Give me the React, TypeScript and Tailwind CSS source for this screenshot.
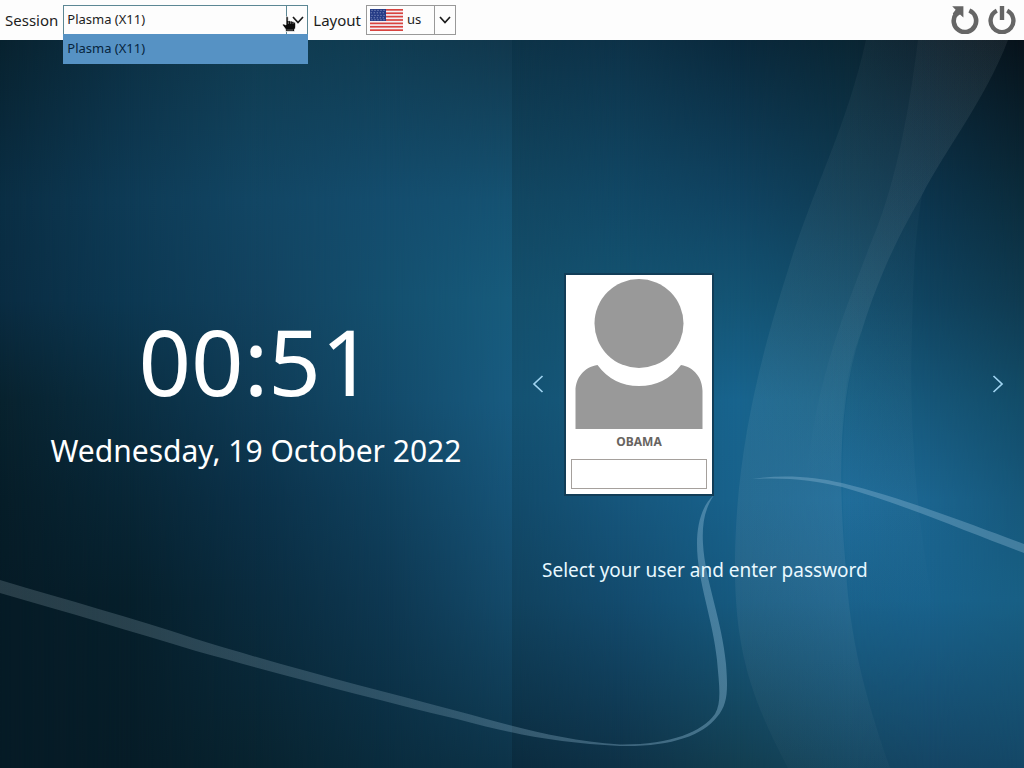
import React from "react";

type Column = { x: number; colors: string[] };

const STOPS = [0, 40, 200, 300, 400, 500, 600, 768];

const LEFT_COLUMNS: Column[] = [
  { x: 0, colors: ["#081f2c", "#08222f", "#0a2e44", "#0a2c42", "#08222e", "#061d28", "#061b26", "#061b26"] },
  { x: 130, colors: ["#0c2f42", "#0c3044", "#0e3b56", "#0c3852", "#0a2e42", "#082636", "#061f2b", "#061c27"] },
  { x: 256, colors: ["#103a4e", "#103b50", "#124664", "#12425f", "#0f3b55", "#0b3149", "#0a2b3e", "#08232f"] },
  { x: 390, colors: ["#103a50", "#103c52", "#144d6e", "#14506f", "#134b6b", "#10415e", "#0e3852", "#0a2c3e"] },
  { x: 512, colors: ["#10344a", "#11374c", "#155272", "#175b7c", "#185b80", "#165377", "#144a6a", "#0d3348"] },
];

const RIGHT_COLUMNS: Column[] = [
  { x: 512, colors: ["#0c3044", "#0d3348", "#124762", "#144f6c", "#145272", "#124a6a", "#11425e", "#0b2b3e"] },
  { x: 620, colors: ["#0c2e44", "#0d3248", "#114866", "#145472", "#165a7e", "#16567c", "#134b6e", "#0e3146"] },
  { x: 740, colors: ["#092536", "#0a293c", "#104361", "#145474", "#18648e", "#18628c", "#165a80", "#133e50"] },
  { x: 850, colors: ["#082230", "#0a2634", "#0f3c54", "#124c6a", "#185f84", "#1c6a98", "#1a628c", "#14455f"] },
  { x: 930, colors: ["#08192a", "#091d2a", "#0c344c", "#10435f", "#165678", "#1b648e", "#19628c", "#154564"] },
  { x: 1024, colors: ["#070f18", "#07121a", "#0b2c3c", "#0f3a50", "#124c68", "#16577a", "#185f84", "#144766"] },
];

function ColorField({ id, columns, end }: { id: string; columns: Column[]; end: number }) {
  const start = columns[0].x;
  return (
    <g>
      {columns.map((col, i) => {
        const from = i === 0 ? start : columns[i - 1].x;
        return (
          <g key={col.x}>
            <defs>
              <linearGradient id={`${id}-v${i}`} x1="0" y1="0" x2="0" y2="768" gradientUnits="userSpaceOnUse">
                {col.colors.map((c, k) => (
                  <stop key={k} offset={STOPS[k] / 768} stopColor={c} />
                ))}
              </linearGradient>
              <linearGradient id={`${id}-h${i}`} x1={from} y1="0" x2={col.x} y2="0" gradientUnits="userSpaceOnUse">
                <stop offset="0" stopColor="#fff" stopOpacity={i === 0 ? 1 : 0} />
                <stop offset="1" stopColor="#fff" />
              </linearGradient>
              <mask id={`${id}-m${i}`} maskUnits="userSpaceOnUse" x={from} y="0" width={end - from} height="768">
                <rect x={from} y="0" width={end - from} height="768" fill={i === 0 ? "#fff" : `url(#${id}-h${i})`} />
              </mask>
            </defs>
            <rect x={from} y="0" width={end - from} height="768" fill={`url(#${id}-v${i})`} mask={`url(#${id}-m${i})`} />
          </g>
        );
      })}
    </g>
  );
}

function Wallpaper() {
  return (
    <svg className="absolute inset-0 h-full w-full" viewBox="0 0 1024 768" preserveAspectRatio="none" aria-hidden="true">
      <defs>
        <linearGradient id="ribbon" x1="0" y1="40" x2="0" y2="768" gradientUnits="userSpaceOnUse">
          <stop offset="0" stopColor="#8fa0a8" stopOpacity="0.06" />
          <stop offset="0.5" stopColor="#9fc4cc" stopOpacity="0.1" />
          <stop offset="0.72" stopColor="#a0b4c4" stopOpacity="0.11" />
          <stop offset="1" stopColor="#a0b4b4" stopOpacity="0.03" />
        </linearGradient>
        <linearGradient id="fold" x1="0" y1="40" x2="0" y2="480" gradientUnits="userSpaceOnUse">
          <stop offset="0" stopColor="#a0a8a8" stopOpacity="0.05" />
          <stop offset="0.6" stopColor="#a0b4c0" stopOpacity="0.06" />
          <stop offset="1" stopColor="#a0c4d4" stopOpacity="0" />
        </linearGradient>
        <linearGradient id="veil" x1="0" y1="200" x2="0" y2="620" gradientUnits="userSpaceOnUse">
          <stop offset="0" stopColor="#b0ccd8" stopOpacity="0.03" />
          <stop offset="0.7" stopColor="#b0ccd8" stopOpacity="0.03" />
          <stop offset="1" stopColor="#b0ccd8" stopOpacity="0" />
        </linearGradient>
        <linearGradient id="trail" x1="0" y1="0" x2="730" y2="0" gradientUnits="userSpaceOnUse">
          <stop offset="0" stopColor="#8ea4ad" stopOpacity="0.25" />
          <stop offset="0.6" stopColor="#8eb0c4" stopOpacity="0.27" />
          <stop offset="1" stopColor="#8ebcd8" stopOpacity="0.42" />
        </linearGradient>
      </defs>
      <ColorField id="left" columns={LEFT_COLUMNS} end={512} />
      <ColorField id="right" columns={RIGHT_COLUMNS} end={1024} />
      <path
        d="M866 40C846 130 812 190 788 270C756 370 736 460 735 560C734 650 752 700 788 768H890C866 700 850 640 846 570C838 480 838 400 862 330C884 260 908 220 922 195C945 150 985 100 1008 40Z"
        fill="url(#ribbon)"
      />
      <path
        d="M918 40C908 120 894 190 870 245C846 310 818 370 806 480H842C840 410 846 370 862 330C884 260 908 220 922 195C945 150 985 100 1008 40Z"
        fill="url(#fold)"
      />
      <path d="M922 195C914 240 913 290 912 330C908 440 920 540 936 620H852C838 500 838 400 862 330C884 260 908 220 922 195Z" fill="url(#veil)" />
      <path
        d="M0 580C70 601 130 617 196 639C290 668 370 688 457 711C520 728 560 740 620 744.5C670 745 702 732 715 714C722 702 719 684 717 660C713 620 697 580 697 544C697 522 703 504 714 495C704 510 702 525 703 544C705 580 722 620 726 664C728 690 728 704 717 717C702 736 670 747 620 746C560 743 520 736 457 719C370 698 290 677 196 651C130 631 70 613 0 593Z"
        fill="url(#trail)"
      />
      <path d="M752 479C784 474 815 477 842 483C900 497 970 524 1024 544V553C970 533 900 503 842 487C815 480 784 477 752 479Z" fill="#98c2dc" fillOpacity="0.34" />
    </svg>
  );
}

function Chevron({ className }: { className: string }) {
  return (
    <svg className={className} viewBox="0 0 12 8" fill="none" stroke="#1b1b1b" strokeWidth="1.7" aria-hidden="true">
      <path d="M1 1L6 6.5L11 1" />
    </svg>
  );
}

function UsFlag() {
  return (
    <svg className="h-[22px] w-[33px] shrink-0" viewBox="0 0 33 22" aria-hidden="true">
      <rect width="33" height="22" fill="#f4f0f4" />
      {[0, 2, 4, 6, 8, 10, 12].map((r) => (
        <rect key={r} y={(r * 22) / 13} width="33" height={22 / 13} fill="#d8433f" />
      ))}
      <rect width="16" height="12" fill="#263c86" />
      {[1.5, 4, 6.5, 9, 11].map((y, i) =>
        [2, 5, 8, 11, 14].map((x) => <circle key={`${x}-${y}`} cx={i % 2 ? x - 0.8 : x} cy={y - 0.3} r="0.5" fill="#b9c3df" />)
      )}
    </svg>
  );
}

function HandPointer() {
  return (
    <svg className="pointer-events-none absolute right-[10px] top-[11px] h-4 w-4" viewBox="0 0 16 16" aria-hidden="true">
      <path
        d="M4 1.6Q4 .5 5 .5Q6.2 .5 6.2 1.6V5Q7.5 4.2 8.5 5.2Q10 4.5 11 5.8Q13.6 5.5 13.6 8V11Q13.6 12.5 12.5 13.2V15.5H3.7V13.4L.7 9.3Q.3 7.8 1.8 7.9L4 9Z"
        fill="#0c0c0c"
        stroke="#fff"
        strokeWidth="0.7"
      />
      <path d="M6.4 6V8M8.7 6V8M11 6.5V8M5 14H11" stroke="#aaa" strokeWidth="0.6" />
    </svg>
  );
}

function Avatar() {
  return (
    <svg className="h-[150px] w-32" viewBox="0 0 128 150" fill="#999999" aria-hidden="true">
      <circle cx="64" cy="44.5" r="44.5" />
      <path d="M22.5 86Q38 107 64 107Q90 107 106 86C119 88 127.500 99 127.500 112V150H.5V112C.5 99 9 88 22.500 86Z" />
    </svg>
  );
}

function ArrowButton({ label, d }: { label: string; d: string }) {
  return (
    <button type="button" aria-label={label} className="flex h-10 w-6 shrink-0 items-center justify-center">
      <svg className="h-[18px] w-3" viewBox="0 0 12 18" fill="none" stroke="#9fd3f0" strokeWidth="1.7" aria-hidden="true">
        <path d={d} />
      </svg>
    </button>
  );
}

function TopBar() {
  return (
    <header className="relative z-10 flex h-10 items-center bg-[#fdfdfd] pl-[5px] pr-2 text-[#1c1c1c]">
      <label htmlFor="session" className="text-[15px]">
        Session
      </label>
      <div className="relative ml-[5px] h-[30px] w-[245px] text-[13px]">
        <select id="session" className="h-full w-full appearance-none border border-[#5c8794] bg-transparent pl-[3px] pr-6 outline-none">
          <option>Plasma (X11)</option>
        </select>
        <span className="pointer-events-none absolute inset-y-0 right-0 flex w-[22px] items-center justify-center border-l border-[#5c8794]">
          <Chevron className="h-2 w-3" />
        </span>
        <ul role="listbox" aria-label="Session" className="absolute left-0 top-[29px] w-full bg-[#5692c4] text-[#06243d]">
          <li role="option" aria-selected="true" className="flex h-[30px] items-center px-1">
            Plasma (X11)
          </li>
        </ul>
        <HandPointer />
      </div>
      <label htmlFor="layout" className="ml-[5px] text-[15px]">
        Layout
      </label>
      <div className="relative ml-[5px] flex h-[30px] w-[90px] items-center border border-[#999] pl-[3px] text-[13px]">
        <UsFlag />
        <select id="layout" className="h-full min-w-0 flex-1 appearance-none bg-transparent pl-1 outline-none">
          <option>us</option>
        </select>
        <span className="pointer-events-none absolute inset-y-0 right-0 flex w-[21px] items-center justify-center border-l border-[#999]">
          <Chevron className="h-2 w-3" />
        </span>
      </div>
      <div className="ml-auto flex gap-[9px]">
        <button type="button" aria-label="Restart">
          <svg className="h-7 w-7" viewBox="0 0 28 28" fill="none" stroke="#666" aria-hidden="true">
            <path d="M18.300 4.500A11.200 11.200 0 1 1 5.200 7.800" strokeWidth="4.600" />
            <path d="M1.200 .3H12.400V11.600L9 8.600L4.500 11.500L1.800 7.500L4.600 3.700Z" fill="#666" stroke="none" />
          </svg>
        </button>
        <button type="button" aria-label="Shut down">
          <svg className="h-7 w-7" viewBox="0 0 28 28" fill="none" stroke="#666" aria-hidden="true">
            <path d="M19.200 4.600A11.400 11.400 0 1 1 8.800 4.600" strokeWidth="4.400" />
            <path d="M14 0V14" strokeWidth="4.400" />
          </svg>
        </button>
      </div>
    </header>
  );
}

export default function App() {
  return (
    <div className="relative flex min-h-screen flex-col overflow-hidden bg-[#0b2b3e] font-['Noto_Sans',sans-serif]">
      <Wallpaper />
      <TopBar />
      <main className="relative grid flex-1 grid-cols-2 pb-10">
        <section className="flex flex-col items-center justify-center text-center text-white">
          <time className="text-[92px] leading-[134px]">00:51</time>
          <p className="text-[30px] leading-[46px]">Wednesday, 19 October 2022</p>
        </section>
        <section className="flex flex-col">
          <div className="flex-1" />
          <div className="flex items-center px-[14px]">
            <ArrowButton label="Previous user" d="M10.500 1L2 9L10.500 17" />
            <div className="flex flex-1 pl-[14px]">
              <div className="flex w-[150px] flex-col items-center border-2 border-[#123d57] bg-white px-[5px] pb-[5px] pt-1">
                <Avatar />
                <label htmlFor="password" className="pb-2 pt-1 text-xs font-bold leading-[18px] text-[#686460]">
                  OBAMA
                </label>
                <input id="password" type="password" className="h-[30px] w-full border border-[#a5a09c] bg-white px-2 outline-none" />
              </div>
            </div>
            <ArrowButton label="Next user" d="M1.500 1L10 9L1.500 17" />
          </div>
          <div className="flex-1">
            <p className="pl-[30px] pt-[60px] text-[19px] leading-7 text-[#e8f8ff]">Select your user and enter password</p>
          </div>
        </section>
      </main>
    </div>
  );
}
